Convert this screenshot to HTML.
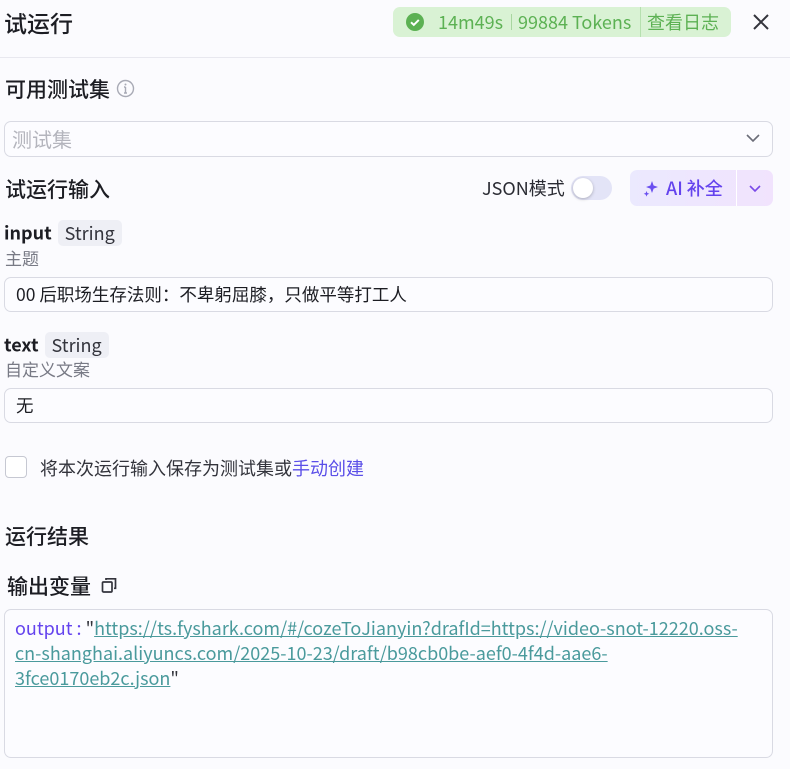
<!DOCTYPE html>
<html><head><meta charset="utf-8"><style>
*{box-sizing:border-box;margin:0;padding:0}
body{width:790px;height:769px;background:#fbfbfe;font-family:"Noto Sans CJK SC","Liberation Sans",sans-serif;color:#1c1d23;position:relative;overflow:hidden}
.a{position:absolute;white-space:nowrap}
.h{font-weight:500}
.box{position:absolute;left:4px;width:769px;border:1px solid #d9dae3;border-radius:7px;background:#fcfcff}
.tag{display:inline-block;background:#eeeff5;border-radius:5px;padding:0 7px;font-size:18px;font-weight:normal;margin-left:6px;height:26px;line-height:26px;color:#33343c;vertical-align:middle}
.lbl{font-size:18px;font-weight:bold;vertical-align:middle}
.sub{font-size:17px;color:#787a85}
.inp{font-size:17.5px;padding-left:11px;line-height:33px}
</style></head><body>
<div class="a h" style="left:4px;top:6px;font-size:23px;line-height:32px">试运行</div>
<div class="a" style="left:393px;top:7px;width:338px;height:30px;background:#d9f2d4;border-radius:7px;color:#5cb153;font-size:18px;line-height:30px">
 <svg class="a" style="left:13px;top:6px" width="18" height="18"><circle cx="9" cy="9" r="9" fill="#5cb153"/><path d="M5 9.3l2.8 2.6 5-5" stroke="#fff" stroke-width="2" fill="none"/></svg>
 <span class="a" style="left:45px">14m49s</span>
 <span class="a" style="left:118px;top:7px;width:1px;height:16px;background:#a8d6a0"></span>
 <span class="a" style="left:125px">99884 Tokens</span>
 <span class="a" style="left:247px;top:0;width:1px;height:30px;background:#b6e0af"></span>
 <span class="a" style="left:254px">查看日志</span>
</div>
<svg class="a" style="left:752px;top:13px" width="18" height="18"><path d="M2 2l14 14M16 2L2 16" stroke="#33343c" stroke-width="2"/></svg>
<div class="a" style="left:0;top:57px;width:790px;height:1px;background:#e8e8ef"></div>
<div class="a h" style="left:5px;top:73px;font-size:21px;line-height:32px">可用测试集</div>
<svg class="a" style="left:116px;top:79px" width="19" height="19"><circle cx="9.5" cy="9.5" r="8" stroke="#a8aab5" stroke-width="1.4" fill="none"/><path d="M9.5 8v6M8 14h3M8 8h1.5" stroke="#a8aab5" stroke-width="1.4" fill="none"/><circle cx="9.5" cy="5.5" r="1" fill="#a8aab5"/></svg>
<div class="box inp" style="top:121px;height:36px;color:#b4b5bd;font-size:20px;padding-left:7px">测试集</div>
<svg class="a" style="left:746px;top:134px" width="14" height="9"><path d="M1 1l6 6 6-6" stroke="#6b6d78" stroke-width="1.6" fill="none"/></svg>
<div class="a h" style="left:5px;top:173px;font-size:21px;line-height:32px">试运行输入</div>
<div class="a" style="left:482px;top:174px;font-size:18px;color:#2a2b33;line-height:28px">JSON模式</div>
<div class="a" style="left:571px;top:176px;width:41px;height:24px;border-radius:12px;background:#e3e4f7"><div class="a" style="left:2px;top:2px;width:20px;height:20px;border-radius:50%;background:#fff;box-shadow:0 1px 3px rgba(0,0,0,.25)"></div></div>
<div class="a" style="left:630px;top:170px;width:143px;height:36px;border-radius:7px;background:linear-gradient(90deg,#ebe9fe,#f1e3fd)">
 <svg class="a" style="left:13px;top:10px" width="17" height="17"><path d="M9 1l1.6 4.5L15 7l-4.4 1.6L9 13l-1.6-4.4L3 7l4.4-1.5z" fill="#6a4ff0"/><path d="M3.5 11l.8 2 2 .8-2 .8-.8 2-.8-2-2-.8 2-.8z" fill="#6a4ff0"/></svg>
 <span class="a h" style="left:36px;top:4px;font-size:18px;color:#6443ee;line-height:28px">AI 补全</span>
 <span class="a" style="left:106px;top:0;width:1px;height:36px;background:#fff"></span>
 <svg class="a" style="left:119px;top:15px" width="12" height="8"><path d="M1 1l5 5 5-5" stroke="#7a4ae8" stroke-width="1.6" fill="none"/></svg>
</div>
<div class="a" style="left:4px;top:217px;line-height:26px"><span class="lbl">input</span><span class="tag">String</span></div>
<div class="a sub" style="left:5px;top:245px;line-height:26px">主题</div>
<div class="box inp" style="top:277px;height:35px">00 后职场生存法则：不卑躬屈膝，只做平等打工人</div>
<div class="a" style="left:4px;top:329px;line-height:26px"><span class="lbl">text</span><span class="tag">String</span></div>
<div class="a sub" style="left:5px;top:356px;line-height:26px">自定义文案</div>
<div class="box inp" style="top:388px;height:35px">无</div>
<div class="a" style="left:5px;top:456px;width:22px;height:22px;border:1px solid #c6c8d2;border-radius:4px;background:#fff"></div>
<div class="a" style="left:40px;top:454px;font-size:18px;color:#33343c;line-height:28px">将本次运行输入保存为测试集或<span style="color:#5a4ee8">手动创建</span></div>
<div class="a h" style="left:5px;top:520px;font-size:21px;line-height:32px">运行结果</div>
<div class="a h" style="left:7px;top:570px;font-size:21px;line-height:32px">输出变量</div>
<svg class="a" style="left:101px;top:577px" width="17" height="17"><rect x="1.5" y="5" width="9.5" height="10" rx="1" stroke="#33343c" stroke-width="1.7" fill="none"/><path d="M5 3V1.8h9.5v9.5h-1.5" stroke="#33343c" stroke-width="1.7" fill="none"/></svg>
<div class="box" style="top:609px;height:149px;padding:6px 10px;font-size:18px;line-height:25px;color:#33343c;overflow-wrap:anywhere"><span style="color:#6443ee">output :</span> "<span style="color:#4a9a9c;text-decoration:underline">https://ts.fyshark.com/#/cozeToJianyin?drafId=https://video-snot-12220.oss-cn-shanghai.aliyuncs.com/2025-10-23/draft/b98cb0be-aef0-4f4d-aae6-3fce0170eb2c.json</span>"</div>
</body></html>
